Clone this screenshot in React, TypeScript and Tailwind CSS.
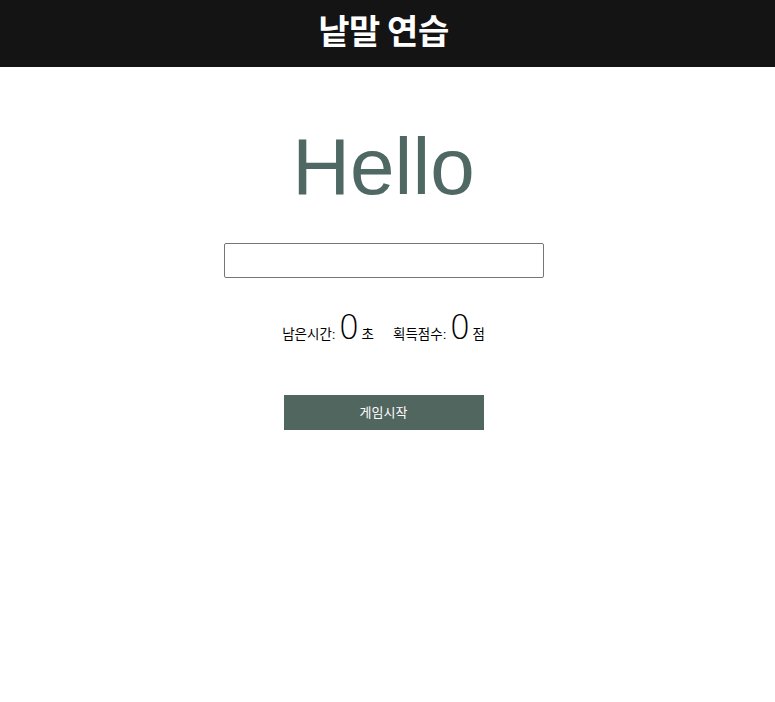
import React from "react";

export default function App() {
  return (
    <div className="min-h-[702px] bg-white" style={{ fontFamily: '"Liberation Sans", "Noto Sans CJK KR", sans-serif' }}>
      <header className="h-[67px] bg-[#141414] flex items-center justify-center pr-[8px] pb-[7px]">
        <h1 className="text-white text-[34px] font-bold leading-none tracking-[-0.5px]" style={{ fontFamily: '"Noto Sans CJK KR", sans-serif' }}>낱말 연습</h1>
      </header>
      <main className="flex flex-col items-center pr-[8px]">
        <div className="mt-[54px] text-[80px] leading-[92px] text-[#4f6863]">Hello</div>
        <input className="mt-[30px] w-[320px] h-[35px] border border-[#767676] rounded-[2px] outline-none px-2" />
        <div className="mt-[33px] flex items-baseline text-[13.5px] text-black">
          <span>남은시간:</span>
          <span className="text-[33px] leading-none ml-[3px] mr-[2px] font-light" style={{ fontFamily: '"DejaVu Sans", sans-serif' }}>0</span>
          <span>초</span>
          <span className="ml-[19px]">획득점수:</span>
          <span className="text-[33px] leading-none ml-[3px] mr-[2px] font-light" style={{ fontFamily: '"DejaVu Sans", sans-serif' }}>0</span>
          <span>점</span>
        </div>
        <button className="mt-[50px] w-[200px] h-[35px] bg-[#51665f] text-white text-[13px]">게임시작</button>
      </main>
    </div>
  );
}
